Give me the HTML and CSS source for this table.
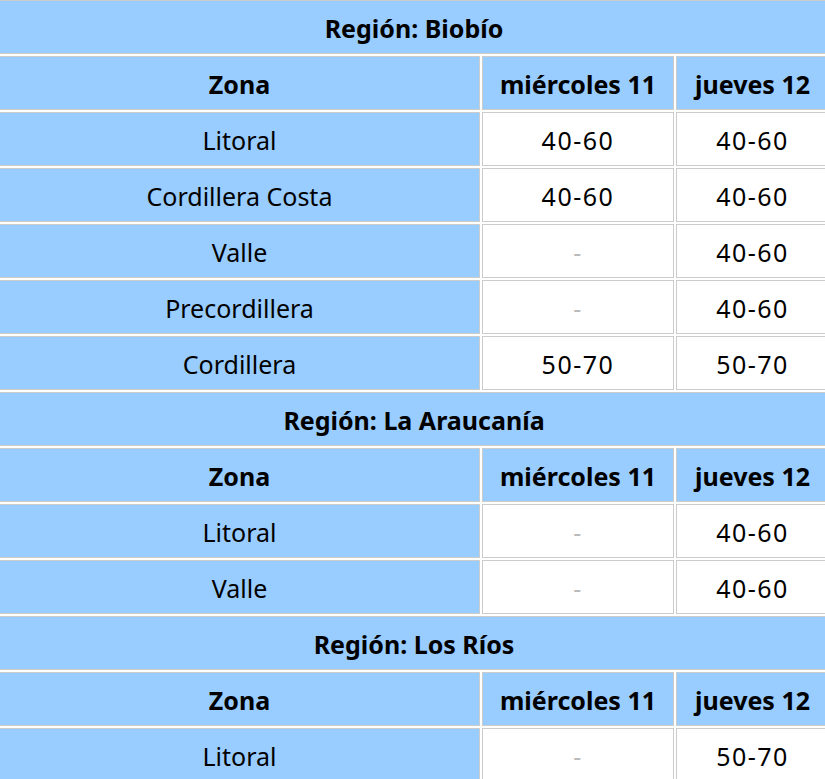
FILE: index.html
```html
<!DOCTYPE html>
<html lang="es">
<head>
<meta charset="utf-8">
<link rel="stylesheet" href="styles.css">
</head>
<body>
<div class="wrap">
<table class="pron">
  <colgroup><col class="c-zona"><col class="c-day"><col class="c-day2"></colgroup>
  <tr><th class="region" colspan="3">Región: Biobío</th></tr>
  <tr><th>Zona</th><th>miércoles 11</th><th>jueves 12</th></tr>
  <tr><td class="zn">Litoral</td><td>40-60</td><td>40-60</td></tr>
  <tr><td class="zn">Cordillera Costa</td><td>40-60</td><td>40-60</td></tr>
  <tr><td class="zn">Valle</td><td class="nd">-</td><td>40-60</td></tr>
  <tr><td class="zn">Precordillera</td><td class="nd">-</td><td>40-60</td></tr>
  <tr><td class="zn">Cordillera</td><td>50-70</td><td>50-70</td></tr>
  <tr><th class="region" colspan="3">Región: La Araucanía</th></tr>
  <tr><th>Zona</th><th>miércoles 11</th><th>jueves 12</th></tr>
  <tr><td class="zn">Litoral</td><td class="nd">-</td><td>40-60</td></tr>
  <tr><td class="zn">Valle</td><td class="nd">-</td><td>40-60</td></tr>
  <tr><th class="region" colspan="3">Región: Los Ríos</th></tr>
  <tr><th>Zona</th><th>miércoles 11</th><th>jueves 12</th></tr>
  <tr><td class="zn">Litoral</td><td class="nd">-</td><td>50-70</td></tr>
</table>
</div>
</body>
</html>
```
FILE: styles.css
```css
html, body {
  margin: 0;
  padding: 0;
  background: #fff;
  overflow: hidden;
}
.wrap {
  margin: -2px -4px 0 -3px;
}
.pron {
  width: 833px;
  border-collapse: separate;
  border-spacing: 2px;
  table-layout: fixed;
  font-family: "Noto Sans", "DejaVu Sans", sans-serif;
  font-size: 25px;
  color: #000;
}
.c-zona { width: 481px; }
.c-day { width: 192px; }
.c-day2 { width: 153px; }
.pron th, .pron td {
  border: 1px solid #cccccc;
  height: 54px;
  padding: 2px 0 0 0;
  text-align: center;
  vertical-align: middle;
  box-sizing: border-box;
  white-space: nowrap;
}
.pron th {
  background: #99ccff;
  font-weight: bold;
}
.pron td {
  background: #fff;
  letter-spacing: 1.5px;
}
.pron td.zn {
  background: #99ccff;
  letter-spacing: 0;
}
.pron td.nd {
  color: #bbbbbb;
}
```
